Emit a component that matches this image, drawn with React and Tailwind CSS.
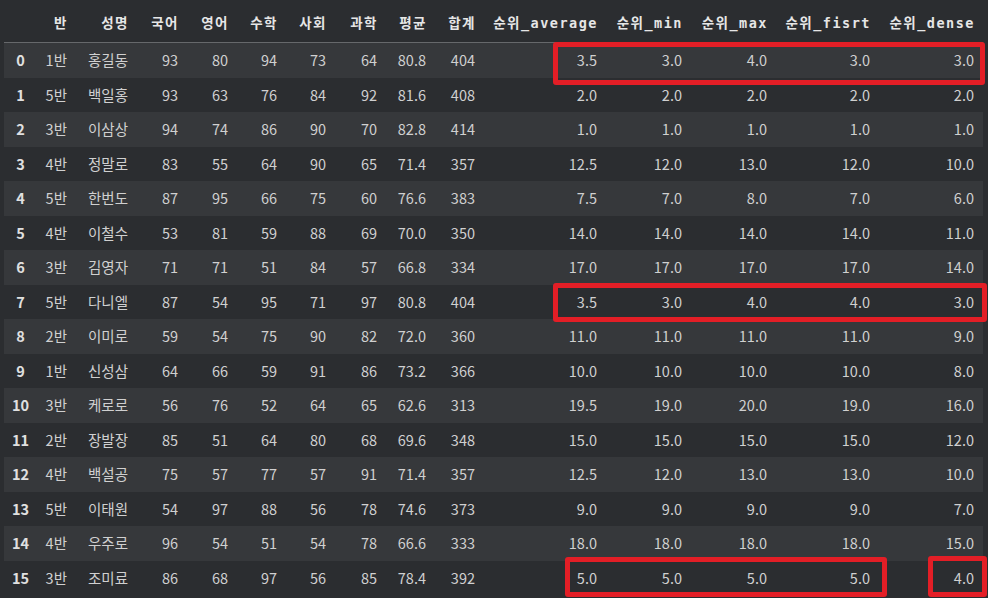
import React from "react";

const columns = [
  { label: "", w: "w-[33px]" },
  { label: "반", w: "w-[38px]" },
  { label: "성명", w: "w-[61px]" },
  { label: "국어", w: "w-[50px]" },
  { label: "영어", w: "w-[50px]" },
  { label: "수학", w: "w-[49px]" },
  { label: "사회", w: "w-[49px]" },
  { label: "과학", w: "w-[51px]" },
  { label: "평균", w: "w-[49px]" },
  { label: "합계", w: "w-[49px]" },
  { label: "순위_average", w: "w-[122px]" },
  { label: "순위_min", w: "w-[85px]" },
  { label: "순위_max", w: "w-[85px]" },
  { label: "순위_fisrt", w: "w-[103px]" },
  { label: "순위_dense", w: "w-[105px]" },
];

const rows = [
  ["1반", "홍길동", 93, 80, 94, 73, 64, "80.8", 404, "3.5", "3.0", "4.0", "3.0", "3.0"],
  ["5반", "백일홍", 93, 63, 76, 84, 92, "81.6", 408, "2.0", "2.0", "2.0", "2.0", "2.0"],
  ["3반", "이삼상", 94, 74, 86, 90, 70, "82.8", 414, "1.0", "1.0", "1.0", "1.0", "1.0"],
  ["4반", "정말로", 83, 55, 64, 90, 65, "71.4", 357, "12.5", "12.0", "13.0", "12.0", "10.0"],
  ["5반", "한번도", 87, 95, 66, 75, 60, "76.6", 383, "7.5", "7.0", "8.0", "7.0", "6.0"],
  ["4반", "이철수", 53, 81, 59, 88, 69, "70.0", 350, "14.0", "14.0", "14.0", "14.0", "11.0"],
  ["3반", "김영자", 71, 71, 51, 84, 57, "66.8", 334, "17.0", "17.0", "17.0", "17.0", "14.0"],
  ["5반", "다니엘", 87, 54, 95, 71, 97, "80.8", 404, "3.5", "3.0", "4.0", "4.0", "3.0"],
  ["2반", "이미로", 59, 54, 75, 90, 82, "72.0", 360, "11.0", "11.0", "11.0", "11.0", "9.0"],
  ["1반", "신성삼", 64, 66, 59, 91, 86, "73.2", 366, "10.0", "10.0", "10.0", "10.0", "8.0"],
  ["3반", "케로로", 56, 76, 52, 64, 65, "62.6", 313, "19.5", "19.0", "20.0", "19.0", "16.0"],
  ["2반", "장발장", 85, 51, 64, 80, 68, "69.6", 348, "15.0", "15.0", "15.0", "15.0", "12.0"],
  ["4반", "백설공", 75, 57, 77, 57, 91, "71.4", 357, "12.5", "12.0", "13.0", "13.0", "10.0"],
  ["5반", "이태원", 54, 97, 88, 56, 78, "74.6", 373, "9.0", "9.0", "9.0", "9.0", "7.0"],
  ["4반", "우주로", 96, 54, 51, 54, 78, "66.6", 333, "18.0", "18.0", "18.0", "18.0", "15.0"],
  ["3반", "조미료", 86, 68, 97, 56, 85, "78.4", 392, "5.0", "5.0", "5.0", "5.0", "4.0"],
];

const headFont = {
  fontFamily: '"DejaVu Sans Mono", "Noto Sans CJK KR", monospace',
};
const bodyFont = {
  fontFamily: '"Noto Sans CJK KR", "Noto Sans", sans-serif',
};

export default function App() {
  return (
    <div className="relative w-[988px] h-[598px] overflow-hidden bg-[#2b2d30]">
      <div className="pl-[4px]">
        {/* Header */}
        <div
          className="flex h-[43px] border-b border-[#66686b] w-[979px] text-[13.5px] font-bold tracking-[1.5px] text-[#e6e6e6]"
          style={headFont}
        >
          {columns.map((c, i) => (
            <div
              key={i}
              className={`${c.w} shrink-0 flex items-end justify-end pb-[9px] leading-5 ${
                i === 14 ? "pr-[8px]" : "pr-[7px]"
              }`}
            >
              {c.label}
            </div>
          ))}
        </div>

        {/* Body */}
        <div className="w-[979px] text-[14.5px] text-[#d0d0d0]" style={bodyFont}>
          {rows.map((r, ri) => (
            <div
              key={ri}
              className={`flex h-[34.5px] items-center ${
                ri % 2 === 0 ? "bg-[#36383b]" : "bg-[#2b2d30]"
              }`}
            >
              <div className="w-[33px] shrink-0 text-center font-bold text-[#e0e0e0]">
                {ri}
              </div>
              {r.map((v, ci) => (
                <div
                  key={ci}
                  className={`${columns[ci + 1].w} shrink-0 text-right ${
                    ci === 13 ? "pr-[9px]" : "pr-[8px]"
                  }`}
                >
                  {v}
                </div>
              ))}
            </div>
          ))}
        </div>
      </div>

      {/* red highlight boxes */}
      <div className="absolute left-[553px] top-[42px] w-[432px] h-[43px] border-[5px] border-[#e31e26] rounded-[3px]" />
      <div className="absolute left-[553px] top-[283px] w-[434px] h-[39px] border-[5px] border-[#e31e26] rounded-[3px]" />
      <div className="absolute left-[565px] top-[557px] w-[322px] h-[40px] border-[5px] border-[#e31e26] rounded-[3px]" />
      <div className="absolute left-[928px] top-[556px] w-[59px] h-[41px] border-[5px] border-[#e31e26] rounded-[3px]" />
    </div>
  );
}
